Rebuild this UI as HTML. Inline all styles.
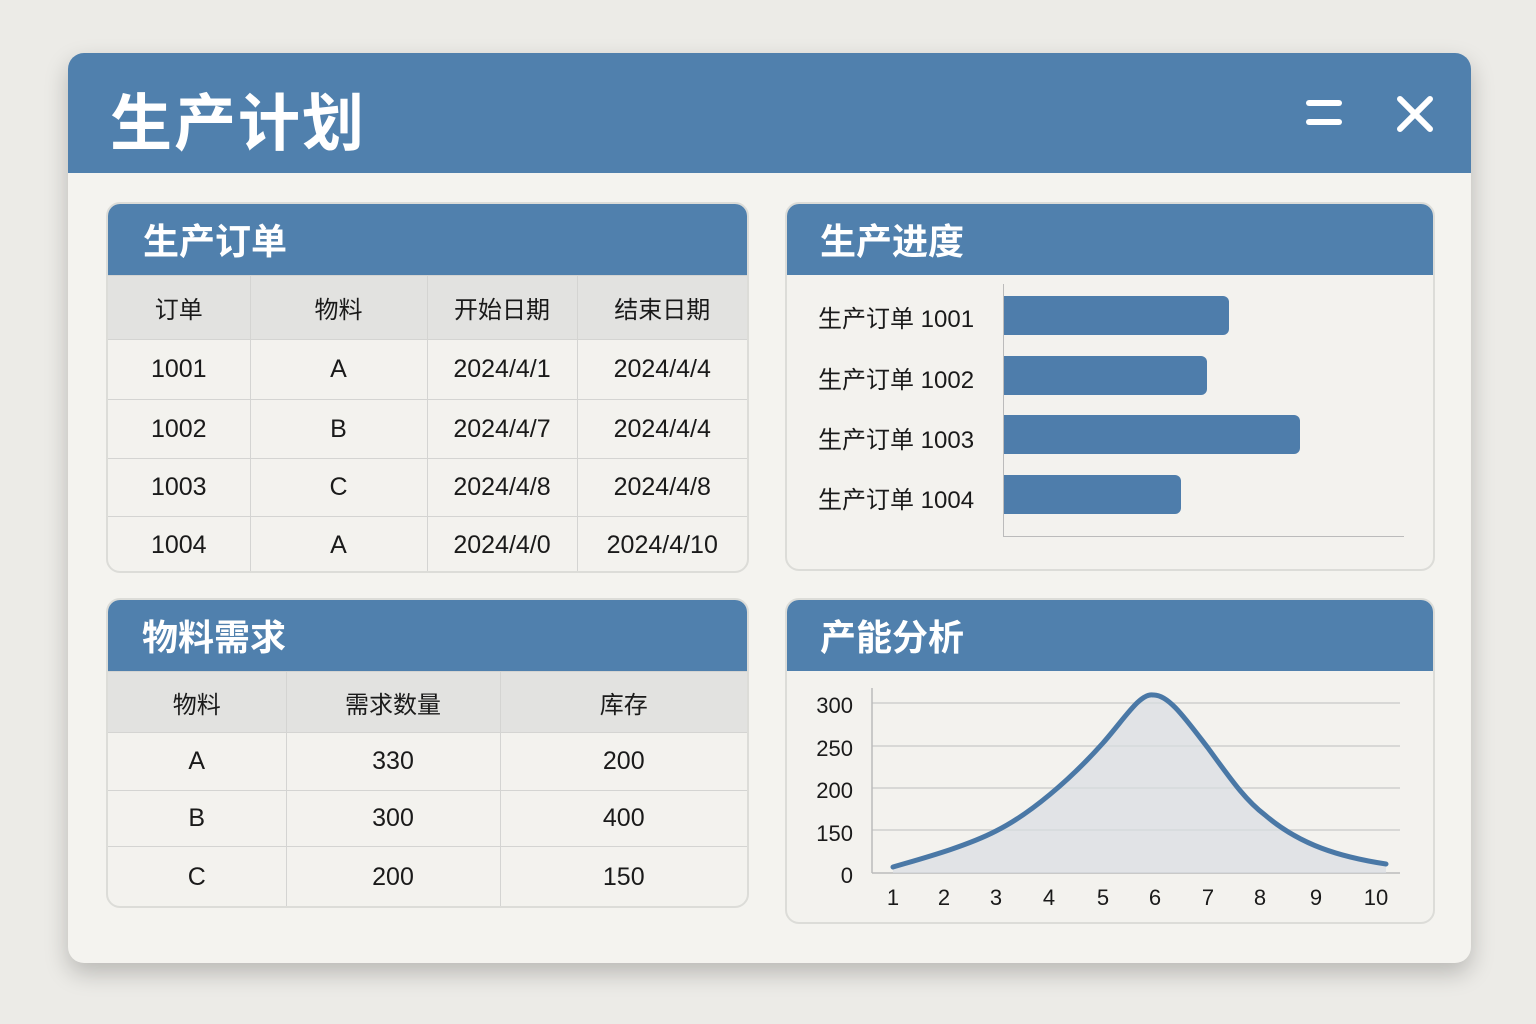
<!DOCTYPE html>
<html><head><meta charset="utf-8"><style>
*{margin:0;padding:0;box-sizing:border-box}
body{width:1536px;height:1024px;background:#ecebe7;position:relative;overflow:hidden;font-family:"Liberation Sans","Noto Sans CJK SC",sans-serif;color:#1a1a1a}
.a{position:absolute}
.win{left:68px;top:53px;width:1403px;height:910px;background:#f4f3ef;border-radius:16px;box-shadow:0 10px 24px rgba(0,0,0,.22);overflow:hidden}
.bar{background:#5080ad}
.panel{background:#f3f2ee;border:2px solid #dcdcd8;border-radius:14px;overflow:hidden}
.ph{position:absolute;left:0;top:0;right:0;background:#5080ad;color:#fff;font-weight:bold;font-size:36px}
table{border-collapse:collapse;position:absolute;left:0;width:100%}
td{border:1.5px solid #d4d4d2;text-align:center;font-size:25px;padding:0}
tr.h td{background:#e2e2e0;font-size:24px}
tr td:first-child{border-left:none}tr td:last-child{border-right:none}
.lab{font-size:24px}
.bb{background:#4e7dab;border-radius:0 6px 6px 0;height:39px;left:1004px}
</style></head><body>
<div class="a win">
 <div class="a bar" style="left:0;top:0;width:1403px;height:120px"></div>
 <div class="a" style="left:42px;top:20px;font-size:62px;font-weight:bold;color:#fff;letter-spacing:2px">生产计划</div>
 <div class="a" style="left:1238px;top:47px;width:36px;height:6px;background:#fff;border-radius:3px"></div>
 <div class="a" style="left:1238px;top:66px;width:36px;height:6px;background:#fff;border-radius:3px"></div>
 <svg class="a" style="left:1326px;top:40px" width="42" height="42"><path d="M6 6L36 36M36 6L6 36" stroke="#fff" stroke-width="6" stroke-linecap="round"/></svg>
</div>

<div class="a panel" style="left:106px;top:202px;width:643px;height:371px">
 <div class="ph" style="height:71px;padding:9px 0 0 35px">生产订单</div>
 <table style="top:71px">
  <colgroup><col style="width:142px"><col style="width:177px"><col style="width:150px"><col></colgroup>
  <tr class="h" style="height:64px"><td>订单</td><td>物料</td><td>开始日期</td><td>结束日期</td></tr>
  <tr style="height:60px"><td>1001</td><td>A</td><td>2024/4/1</td><td>2024/4/4</td></tr>
  <tr style="height:59px"><td>1002</td><td>B</td><td>2024/4/7</td><td>2024/4/4</td></tr>
  <tr style="height:58px"><td>1003</td><td>C</td><td>2024/4/8</td><td>2024/4/8</td></tr>
  <tr style="height:58px"><td>1004</td><td>A</td><td>2024/4/0</td><td>2024/4/10</td></tr>
 </table>
</div>

<div class="a panel" style="left:785px;top:202px;width:650px;height:369px">
 <div class="ph" style="height:71px;padding:9px 0 0 33px">生产进度</div>
</div>
<div class="a lab" style="left:818px;top:299px">生产订单 1001</div>
<div class="a lab" style="left:818px;top:360px">生产订单 1002</div>
<div class="a lab" style="left:818px;top:420px">生产订单 1003</div>
<div class="a lab" style="left:818px;top:480px">生产订单 1004</div>
<div class="a" style="left:1003px;top:284px;width:1px;height:253px;background:#bbb"></div>
<div class="a" style="left:1003px;top:536px;width:401px;height:1px;background:#bbb"></div>
<div class="a bb" style="top:296px;width:225px"></div>
<div class="a bb" style="top:356px;width:203px"></div>
<div class="a bb" style="top:415px;width:296px"></div>
<div class="a bb" style="top:475px;width:177px"></div>

<div class="a panel" style="left:106px;top:598px;width:643px;height:310px">
 <div class="ph" style="height:71px;padding:9px 0 0 34px">物料需求</div>
 <table style="top:71px">
  <colgroup><col style="width:178px"><col style="width:214px"><col></colgroup>
  <tr class="h" style="height:61px"><td>物料</td><td>需求数量</td><td>库存</td></tr>
  <tr style="height:58px"><td>A</td><td>330</td><td>200</td></tr>
  <tr style="height:56px"><td>B</td><td>300</td><td>400</td></tr>
  <tr style="height:62px"><td>C</td><td>200</td><td>150</td></tr>
 </table>
</div>

<div class="a panel" style="left:785px;top:598px;width:650px;height:326px">
 <div class="ph" style="height:71px;padding:9px 0 0 33px">产能分析</div>
</div>
<svg class="a" style="left:0;top:0" width="1536" height="1024">
 <g stroke="#d0d0ce" stroke-width="1.5">
  <line x1="872" y1="703" x2="1400" y2="703"/><line x1="872" y1="746" x2="1400" y2="746"/>
  <line x1="872" y1="788" x2="1400" y2="788"/><line x1="872" y1="830" x2="1400" y2="830"/>
  <line x1="872" y1="873" x2="1400" y2="873" stroke="#bbb"/><line x1="872" y1="688" x2="872" y2="873" stroke="#bbb"/>
 </g>
 <path d="M893 867 C920 859 965 847 996 831 C1030 814 1070 780 1103 743 C1125 718 1140 693 1153 695 C1168 694 1185 718 1208 748 C1230 778 1245 800 1265 815 C1300 845 1340 857 1386 864 L1386 873 L893 873Z" fill="#d8dde3" opacity=".7"/>
 <path d="M893 867 C920 859 965 847 996 831 C1030 814 1070 780 1103 743 C1125 718 1140 693 1153 695 C1168 694 1185 718 1208 748 C1230 778 1245 800 1265 815 C1300 845 1340 857 1386 864" fill="none" stroke="#4a78a6" stroke-width="5" stroke-linecap="round"/>
 <g font-family="Liberation Sans, sans-serif" font-size="22" fill="#1a1a1a" text-anchor="end">
  <text x="853" y="713">300</text><text x="853" y="756">250</text><text x="853" y="798">200</text><text x="853" y="841">150</text><text x="853" y="883">0</text>
 </g>
 <g font-family="Liberation Sans, sans-serif" font-size="22" fill="#1a1a1a" text-anchor="middle">
  <text x="893" y="905">1</text><text x="944" y="905">2</text><text x="996" y="905">3</text><text x="1049" y="905">4</text><text x="1103" y="905">5</text><text x="1155" y="905">6</text><text x="1208" y="905">7</text><text x="1260" y="905">8</text><text x="1316" y="905">9</text><text x="1376" y="905">10</text>
 </g>
</svg>
</body></html>
